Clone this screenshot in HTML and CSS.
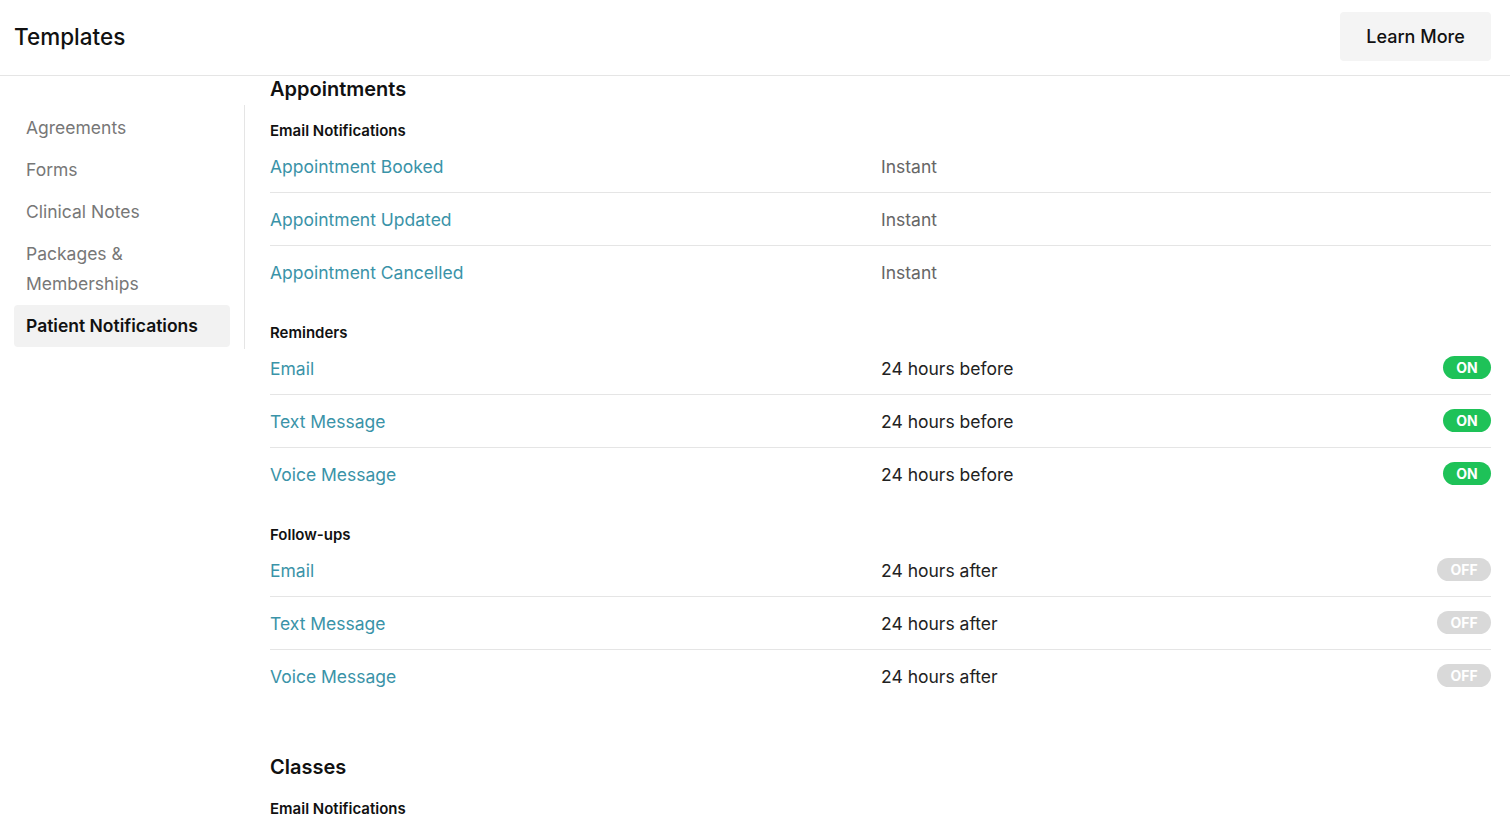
FILE: index.html
```html
<!DOCTYPE html>
<html lang="en">
<head>
<meta charset="utf-8">
<title>Templates</title>
<link rel="stylesheet" href="styles.css">
</head>
<body>
<header class="topbar">
  <h1 class="page-title">Templates</h1>
  <button class="btn-learn">Learn More</button>
</header>
<div class="layout">
  <aside class="sidebar">
    <nav class="side-nav">
      <a class="side-item">Agreements</a>
      <a class="side-item">Forms</a>
      <a class="side-item">Clinical Notes</a>
      <a class="side-item">Packages &amp;<br>Memberships</a>
      <a class="side-item active">Patient Notifications</a>
    </nav>
  </aside>
  <main class="content">
    <section class="section">
      <h2 class="section-title">Appointments</h2>
      <div class="group">
        <h3 class="group-title">Email Notifications</h3>
        <div class="row"><a class="row-name">Appointment Booked</a><span class="row-value muted">Instant</span><span></span></div>
        <div class="row"><a class="row-name">Appointment Updated</a><span class="row-value muted">Instant</span><span></span></div>
        <div class="row"><a class="row-name">Appointment Cancelled</a><span class="row-value muted">Instant</span><span></span></div>
      </div>
      <div class="group">
        <h3 class="group-title">Reminders</h3>
        <div class="row"><a class="row-name">Email</a><span class="row-value">24 hours before</span><span class="toggle on">ON</span></div>
        <div class="row"><a class="row-name">Text Message</a><span class="row-value">24 hours before</span><span class="toggle on">ON</span></div>
        <div class="row"><a class="row-name">Voice Message</a><span class="row-value">24 hours before</span><span class="toggle on">ON</span></div>
      </div>
      <div class="group">
        <h3 class="group-title">Follow-ups</h3>
        <div class="row"><a class="row-name">Email</a><span class="row-value">24 hours after</span><span class="toggle off">OFF</span></div>
        <div class="row"><a class="row-name">Text Message</a><span class="row-value">24 hours after</span><span class="toggle off">OFF</span></div>
        <div class="row"><a class="row-name">Voice Message</a><span class="row-value">24 hours after</span><span class="toggle off">OFF</span></div>
      </div>
    </section>
    <section class="section">
      <h2 class="section-title">Classes</h2>
      <div class="group">
        <h3 class="group-title">Email Notifications</h3>
      </div>
    </section>
  </main>
</div>
</body>
</html>
```
FILE: styles.css
```css
* { box-sizing: border-box; }
html, body { height: 100%; }
body {
  margin: 0;
  font-family: Inter, "Noto Sans", "Liberation Sans", sans-serif;
  color: #111;
  background: #fff;
  overflow: hidden;
}
.topbar {
  height: 76px;
  display: flex;
  align-items: center;
  justify-content: space-between;
  padding: 0 19px 0 14px;
  border-bottom: 1px solid #e5e5e5;
}
.page-title {
  margin: -2px 0 0;
  font-size: 22.5px;
  font-weight: 500;
  color: #111;
}
.btn-learn {
  width: 151px;
  height: 49px;
  margin-top: -2px;
  border: none;
  border-radius: 4px;
  background: #f4f4f4;
  font-family: inherit;
  font-size: 18px;
  font-weight: 500;
  color: #111;
}
.layout {
  display: flex;
  align-items: flex-start;
}
.sidebar {
  width: 245px;
  flex-shrink: 0;
  padding: 31px 14px 0 14px;
}
.side-nav {
  display: flex;
  flex-direction: column;
  border-right: 1px solid #e5e5e5;
  margin-right: -14px;
  padding-right: 14px;
  margin-top: -2px;
  padding-top: 2px;
  padding-bottom: 2px;
}
.side-item {
  padding: 6px 12px;
  font-size: 17.5px;
  line-height: 30px;
  color: #777;
  border-radius: 4px;
}
.side-item.active {
  background: #f2f2f2;
  color: #111;
  font-weight: 600;
}
.content {
  flex: 1;
  padding: 1px 19px 0 25px;
}
.section { margin-bottom: 53px; }
.section-title {
  margin: 0 0 20px;
  font-size: 20px;
  font-weight: 600;
  line-height: 24px;
  color: #111;
}
.group { margin-bottom: 25px; }
.group-title {
  margin: 0 0 -1px;
  font-size: 15px;
  font-weight: 600;
  line-height: 20px;
  color: #111;
}
.row {
  display: grid;
  grid-template-columns: 611px 1fr auto;
  align-items: center;
  height: 53px;
  border-bottom: 1px solid #e5e5e5;
  font-size: 17.5px;
}
.row:last-child { border-bottom: none; height: 52px; }
.row-name { color: #3a93a8; }
.row-value { color: #222; }
.row-value.muted { color: #666; }
.toggle {
  display: inline-flex;
  align-items: center;
  justify-content: center;
  height: 23px;
  margin-top: -1px;
  border-radius: 12px;
  font-size: 14px;
  font-weight: 700;
  color: #fff;
}
.toggle.on { width: 48px; background: #1ec258; }
.toggle.off { width: 54px; background: #d9d9d9; }
```
